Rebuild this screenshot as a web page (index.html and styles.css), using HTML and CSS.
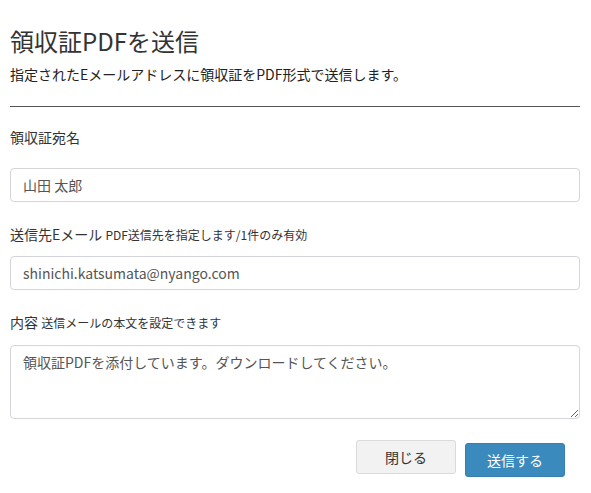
FILE: index.html
```html
<!DOCTYPE html>
<html lang="ja">
<head>
<meta charset="utf-8">
<link rel="stylesheet" href="styles.css">
</head>
<body>
<div class="dialog">
  <header class="head">
    <h1 class="title">領収証PDFを送信</h1>
    <p class="sub">指定されたEメールアドレスに領収証をPDF形式で送信します。</p>
  </header>
  <div class="form">
    <div class="field">
      <label class="label label-wide">領収証宛名</label>
      <input class="input" type="text" value="山田 太郎">
    </div>
    <div class="field">
      <label class="label">送信先Eメール <span class="note">PDF送信先を指定します/1件のみ有効</span></label>
      <input class="input" type="text" value="shinichi.katsumata@nyango.com">
    </div>
    <div class="field">
      <label class="label label-area">内容 <span class="note">送信メールの本文を設定できます</span></label>
      <textarea class="area">領収証PDFを添付しています。ダウンロードしてください。</textarea>
    </div>
  </div>
  <div class="actions">
    <button class="btn btn-close">閉じる</button>
    <button class="btn btn-send">送信する</button>
  </div>
</div>
</body>
</html>
```
FILE: styles.css
```css
* { box-sizing: border-box; }
html, body { margin: 0; padding: 0; background: #fff; }
body {
  font-family: "Noto Sans CJK JP", "Noto Sans", sans-serif;
  color: #333;
}
.dialog { padding: 26px 11px 0 10px; }
.head { border-bottom: 1px solid #555; padding-bottom: 22px; }
.title {
  margin: 0;
  font-size: 24px;
  font-weight: 400;
  line-height: 30px;
  color: #333;
}
.sub {
  margin: 8px 0 0;
  font-size: 14px;
  line-height: 20px;
  color: #222;
}
.form { padding-top: 20px; }
.field { display: flex; flex-direction: column; }
.label {
  font-size: 14px;
  line-height: 20px;
  color: #333;
  margin-bottom: 11px;
}
.label-wide { margin-bottom: 21px; }
.label-area { margin-bottom: 12px; }
.note { font-size: 12px; }
.input {
  height: 34px;
  border: 1px solid #d4d4dc;
  border-radius: 4px;
  padding: 0 12px;
  font-family: inherit;
  font-size: 14px;
  color: #555;
  margin-bottom: 22px;
  outline: none;
}
.area {
  height: 74px;
  border: 1px solid #d4d4dc;
  border-radius: 4px;
  padding: 6px 12px;
  font-family: inherit;
  font-size: 14px;
  line-height: 20px;
  color: #555;
  resize: vertical;
  outline: none;
}
.actions {
  display: flex;
  justify-content: flex-end;
  align-items: flex-start;
  gap: 9px;
  padding: 21px 15px 0 0;
}
.btn {
  width: 100px;
  height: 34px;
  font-family: inherit;
  font-size: 14px;
  border-radius: 3px;
  cursor: pointer;
}
.btn-close {
  background: #f2f2f2;
  border: 1px solid #dadada;
  color: #333;
}
.btn-send {
  margin-top: 3px;
  background: #3a8abd;
  border: 1px solid #3580b0;
  color: #fff;
}
```
